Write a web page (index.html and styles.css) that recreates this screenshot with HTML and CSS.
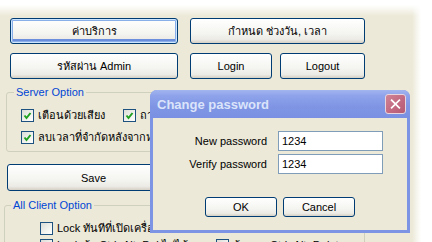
FILE: index.html
```html
<!DOCTYPE html>
<html>
<head>
<meta charset="utf-8">
<link rel="stylesheet" href="styles.css">
</head>
<body>
<div class="screen">
  <div class="row r1">
    <button class="btn focus wide">ค่าบริการ</button>
    <button class="btn period">กำหนด ช่วงวัน, เวลา</button>
  </div>
  <div class="row r2">
    <button class="btn wide">รหัสผ่าน Admin</button>
    <button class="btn login">Login</button>
    <button class="btn logout">Logout</button>
  </div>
  <fieldset class="group server">
    <legend>Server Option</legend>
    <div class="checks server-checks">
      <label class="chk c1"><span class="box on"><svg viewBox="0 0 11 11"><polyline points="2.5,5.5 4.5,8 8.5,3"/></svg></span>เตือนด้วยเสียง</label>
      <label class="chk"><span class="box on"><svg viewBox="0 0 11 11"><polyline points="2.5,5.5 4.5,8 8.5,3"/></svg></span>ถามก่อนปิดเครื่อง</label>
    </div>
    <div class="checks server-checks2">
      <label class="chk"><span class="box on"><svg viewBox="0 0 11 11"><polyline points="2.5,5.5 4.5,8 8.5,3"/></svg></span>ลบเวลาที่จำกัดหลังจากหยุดใช้งาน</label>
    </div>
  </fieldset>
  <button class="btn save">Save</button>
  <fieldset class="group client">
    <legend>All Client Option</legend>
    <div class="checks client-checks">
      <label class="chk"><span class="box"></span>Lock ทันทีที่เปิดเครื่อง</label>
    </div>
    <div class="checks client-checks2">
      <label class="chk c2"><span class="box"></span>Lock ถ้า Ctrl+Alt+Del ไม่ได้</label>
      <label class="chk"><span class="box"></span>ห้ามกด Ctrl+Alt+Delete</label>
    </div>
  </fieldset>

  <div class="dialog">
    <div class="titlebar">
      <span class="title">Change password</span>
      <span class="close"><svg viewBox="0 0 21 21"><path d="M6 6 L15 15 M15 6 L6 15"/></svg></span>
    </div>
    <div class="client-area">
      <div class="form">
        <span class="lbl">New password</span>
        <span class="input">1234</span>
        <span class="lbl">Verify password</span>
        <span class="input">1234</span>
      </div>
      <div class="actions">
        <button class="btn small">OK</button>
        <button class="btn small">Cancel</button>
      </div>
    </div>
  </div>
</div>
</body>
</html>
```
FILE: styles.css
```css
* { box-sizing: border-box; }
html, body { margin: 0; padding: 0; }
body {
  width: 432px;
  height: 242px;
  overflow: hidden;
  font-family: "Liberation Sans", "Noto Sans", "DejaVu Sans", sans-serif;
  font-size: 11px;
  color: #000;
}
.screen {
  position: relative;
  width: 432px;
  height: 242px;
  overflow: hidden;
  padding: 18px 0 0 0;
  background:
    linear-gradient(to bottom, #ffffff 5px, rgba(255,255,255,0) 16px),
    linear-gradient(to left, #ffffff 11px, rgba(255,255,255,0) 20px),
    #ECE9D8;
}
.row { display: flex; padding-left: 10px; }
.r1 { gap: 12px; }
.r2 { gap: 12px; margin-top: 9px; }
.btn {
  font-family: inherit;
  font-size: 11px;
  color: #000;
  height: 26px;
  padding: 0;
  border: 1px solid #003C74;
  border-radius: 3px;
  background: linear-gradient(to bottom, #ffffff 0%, #f4f4f0 60%, #ecebe6 85%, #d6d0c5 100%);
  display: flex;
  align-items: center;
  justify-content: center;
}
.btn.focus {
  box-shadow: inset 0 0 0 1px #cee7ff, inset 0 0 0 2px #8aaee8, inset 0 -2px 0 2px #6b8fdc;
}
.wide { width: 168px; }
.period { width: 175px; }
.login { width: 82px; }
.r2 .logout { width: 85px; margin-left: -4px; }
.group {
  margin: 0;
  padding: 0;
  border: 1px solid #D0D0BF;
  border-radius: 3px;
  min-width: 0;
}
.group legend {
  color: #0046D5;
  font-size: 11px;
  line-height: 13px;
  padding: 0 2px;
  margin-left: 7px;
}
.server {
  margin: 7px 0 0 6px;
  width: 359px;
  padding-bottom: 7px;
}
.checks { display: flex; }
.server-checks { padding: 10px 0 0 14px; }
.server-checks2 { padding: 9px 0 0 14px; }
.chk {
  display: flex;
  align-items: center;
  gap: 4px;
  line-height: 13px;
  height: 13px;
  white-space: nowrap;
}
.c1 { width: 102px; }
.box {
  width: 13px;
  height: 13px;
  flex: none;
  border: 1px solid #1C5180;
  background: linear-gradient(135deg, #dcdcd7 0%, #f6f6f3 70%, #ffffff 100%);
  display: flex;
  align-items: center;
  justify-content: center;
}
.box svg { width: 11px; height: 11px; }
.box polyline { fill: none; stroke: #21A121; stroke-width: 2; }
.save {
  margin: 12px 0 0 7px;
  width: 173px;
  height: 27px;
}
.client {
  margin: 8px 0 0 4px;
  width: 361px;
  height: 60px;
}
.client legend { margin-left: 6px; }
.client-checks { padding: 10px 0 0 35px; }
.client-checks2 { padding: 4px 0 0 35px; }
.c2 { width: 176px; }

.dialog {
  position: absolute;
  left: 150px;
  top: 90px;
  width: 260px;
  height: 143px;
  background: #7d93e4;
  border-radius: 7px 7px 0 0;
  padding: 0 3px 3px 3px;
  display: flex;
  flex-direction: column;
}
.titlebar {
  height: 28px;
  margin: 0 -3px;
  padding: 0 4px 0 7px;
  border-radius: 7px 7px 0 0;
  background: linear-gradient(to bottom, #a3b5ef 0%, #8ea3ea 20%, #7f95e4 60%, #7a90e2 100%);
  display: flex;
  align-items: center;
  justify-content: space-between;
}
.title {
  font-family: "Liberation Sans", sans-serif;
  font-weight: bold;
  font-size: 13px;
  color: #dbe4fa;
  padding-top: 1px;
}
.close {
  width: 21px;
  height: 20px;
  border: 1px solid #e8d4dc;
  border-radius: 3px;
  background: linear-gradient(135deg, #d08496 0%, #c1677f 60%, #b45a72 100%);
  display: flex;
}
.close svg { width: 19px; height: 18px; }
.close path { stroke: #ffffff; stroke-width: 2; stroke-linecap: square; }
.client-area {
  flex: 1;
  background: #ECE9D8;
  padding-top: 13px;
}
.form {
  display: grid;
  grid-template-columns: 114px 105px;
  column-gap: 11px;
  row-gap: 3px;
  align-items: center;
}
.lbl { text-align: right; font-size: 11px; }
.input {
  height: 20px;
  background: #fff;
  border: 1px solid #7F9DB9;
  padding: 0 3px;
  line-height: 18px;
}
.actions {
  display: flex;
  gap: 6px;
  padding-left: 52px;
  margin-top: 23px;
}
.btn.small { width: 72px; height: 20px; }
```
